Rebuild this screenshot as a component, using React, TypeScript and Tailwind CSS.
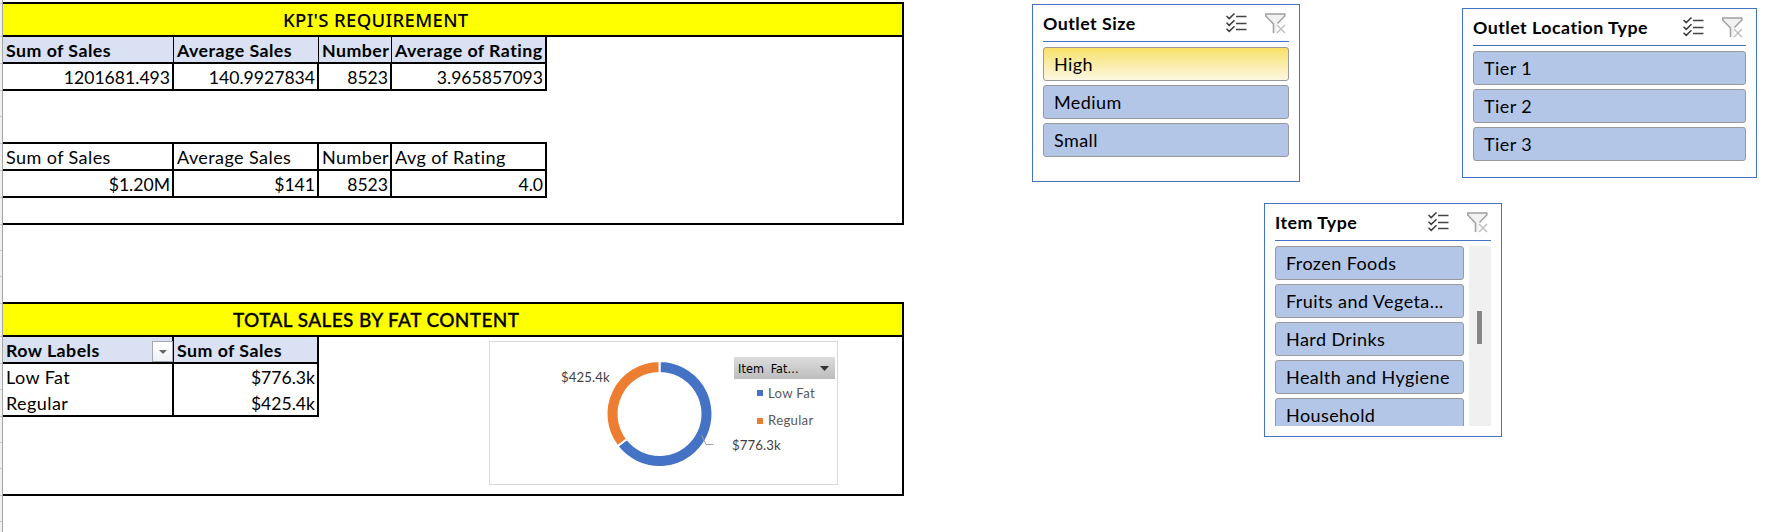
import React from "react";

const TICKS = [3, 36, 63, 90, 116, 143, 170, 197, 224, 250, 276, 303, 336, 363, 389, 416, 442, 468, 495, 521];

type CellProps = { children?: React.ReactNode; className?: string };

function Cell({ children, className = "" }: CellProps) {
  return (
    <div className={`flex h-[25px] items-center overflow-hidden pt-[2px] whitespace-pre ${className}`}>
      <span>{children}</span>
    </div>
  );
}

const BOLD = "font-bold text-[17.8px] tracking-[0.45px]";
const REG = "text-[18px] tracking-[0.42px]";
const NUM = "text-[17.6px]";

function KpiTable() {
  return (
    <div className="w-[544px]">
      <div className={`flex border-b-2 border-black bg-[#d9e1f2] ${BOLD}`}>
        <Cell className="w-[171px] border-r border-black pl-[3px]">Sum of Sales</Cell>
        <Cell className="w-[145px] border-r border-black pl-[3px]">Average Sales</Cell>
        <Cell className="w-[73px] border-r border-black pl-[3px]">Number</Cell>
        <Cell className="w-[155px] border-r-2 border-black pl-[3px]">Average of Rating</Cell>
      </div>
      <div className={`flex border-b-2 border-black ${NUM}`}>
        <Cell className="w-[171px] justify-end border-r-2 border-black pt-[3px] pr-[2px]">1201681.493</Cell>
        <Cell className="w-[145px] justify-end border-r-2 border-black pt-[3px] pr-[2px]">140.9927834</Cell>
        <Cell className="w-[73px] justify-end border-r-2 border-black pt-[3px] pr-[2px]">8523</Cell>
        <Cell className="w-[155px] justify-end border-r-2 border-black pt-[3px] pr-[2px]">3.965857093</Cell>
      </div>
      <div className="h-[51px]" />
      <div className={`flex border-y-2 border-black ${REG}`}>
        <Cell className="w-[171px] border-r-2 border-black pl-[3px]">Sum of Sales</Cell>
        <Cell className="w-[145px] border-r-2 border-black pl-[3px]">Average Sales</Cell>
        <Cell className="w-[73px] border-r-2 border-black pl-[3px]">Number</Cell>
        <Cell className="w-[155px] border-r-2 border-black pl-[3px]">Avg of Rating</Cell>
      </div>
      <div className={`flex border-b-2 border-black ${NUM}`}>
        <Cell className="w-[171px] justify-end border-r-2 border-black pt-[3px] pr-[2px]">$1.20M</Cell>
        <Cell className="w-[145px] justify-end border-r-2 border-black pt-[3px] pr-[2px]">$141</Cell>
        <Cell className="w-[73px] justify-end border-r-2 border-black pt-[3px] pr-[2px]">8523</Cell>
        <Cell className="w-[155px] justify-end border-r-2 border-black pt-[3px] pr-[2px]">4.0</Cell>
      </div>
    </div>
  );
}

function FatTable() {
  return (
    <div className="h-fit w-[316px] shrink-0 border-b-2 border-black">
      <div className={`flex border-b-2 border-black bg-[#d9e1f2] ${BOLD}`}>
        <div className="relative">
          <Cell className="w-[171px] border-r-2 border-black pl-[3px]">Row Labels</Cell>
          <div className="absolute top-[4px] right-px flex h-[21px] w-[21px] items-center justify-center border border-[#a6a6b0] bg-linear-to-b from-white to-[#eef1f6]">
            <svg width="8" height="4" viewBox="0 0 8 4">
              <path d="M0 0h8L4 4z" fill="#666" />
            </svg>
          </div>
        </div>
        <Cell className="w-[145px] border-r-2 border-black pl-[3px]">Sum of Sales</Cell>
      </div>
      <div className="flex">
        <Cell className={`h-[26px] w-[171px] border-r-2 border-black pt-px pl-[3px] ${REG}`}>Low Fat</Cell>
        <Cell className={`h-[26px] w-[145px] justify-end border-r-2 border-black pr-[2px] ${NUM}`}>$776.3k</Cell>
      </div>
      <div className="flex">
        <Cell className={`w-[171px] border-r-2 border-black pl-[3px] ${REG}`}>Regular</Cell>
        <Cell className={`w-[145px] justify-end border-r-2 border-black pt-[3px] pr-[2px] ${NUM}`}>$425.4k</Cell>
      </div>
    </div>
  );
}

function arc(a0: number, a1: number, r0: number, r1: number) {
  const p = (a: number, r: number) => {
    const t = ((a - 90) * Math.PI) / 180;
    return `${(r * Math.cos(t)).toFixed(2)} ${(r * Math.sin(t)).toFixed(2)}`;
  };
  const big = a1 - a0 > 180 ? 1 : 0;
  return `M${p(a0, r1)}A${r1} ${r1} 0 ${big} 1 ${p(a1, r1)}L${p(a1, r0)}A${r0} ${r0} 0 ${big} 0 ${p(a0, r0)}Z`;
}

function DonutChart() {
  const split = (776.3 / (776.3 + 425.4)) * 360;
  return (
    <div className="relative mt-[4px] ml-[170px] h-[144px] w-[349px] border border-[#d9d9d9] bg-white text-[13.2px] tracking-[0.1px] text-[#404040]">
      <svg className="block" width="347" height="142" viewBox="0 0 347 142">
        <g transform="translate(169.5 72)" stroke="#fff" strokeWidth="2">
          <path d={arc(0, split, 41, 53)} fill="#4472c4" />
          <path d={arc(split, 360, 41, 53)} fill="#ed7d31" />
        </g>
        <path d="M211.5 93L216 102.5H223.5" fill="none" stroke="#a6a6a6" strokeWidth="1" />
      </svg>
      <span className="absolute top-[26px] left-[71px]">$425.4k</span>
      <span className="absolute top-[94px] left-[242px]">$776.3k</span>
      <div className="absolute top-[15px] left-[244px] flex h-[22px] w-[101px] items-center justify-between bg-linear-to-b from-[#dcdcdc] to-[#bdbdbd] pr-[6px] pl-[4px] font-['DejaVu_Sans_Condensed','DejaVu_Sans',sans-serif] text-[12.5px] tracking-[0.1px] [word-spacing:3px] text-black">
        <span className="pt-[2px] whitespace-pre">Item Fat...</span>
        <svg width="9" height="5" viewBox="0 0 9 5">
          <path d="M0 0h9L4.5 5z" fill="#333" />
        </svg>
      </div>
      <div className="absolute top-[42px] left-[267px] flex flex-col gap-[7px] text-[#595959]">
        <div className="flex h-[20px] items-center gap-[5px]">
          <i className="mb-[2px] size-[6px] bg-[#4472c4]" />
          <span className="tracking-[0.3px]">Low Fat</span>
        </div>
        <div className="flex h-[20px] items-center gap-[5px]">
          <i className="size-[6px] bg-[#ed7d31]" />
          <span className="tracking-[0.3px]">Regular</span>
        </div>
      </div>
    </div>
  );
}

function MultiSelectIcon() {
  return (
    <svg width="21" height="20" viewBox="0 0 21 20" fill="none">
      <path d="M0.5 3L3.2 5.6L8.5 0.5M0.5 9.8L3.2 12.4L8.5 7.3M0.5 15.8L3.2 18.4L8.5 13.3" stroke="#3c3c3c" strokeWidth="1.5" />
      <path d="M10 3.5H20.5M10 10.5H20.5M10 16.5H20.5" stroke="#444" strokeWidth="1.3" />
    </svg>
  );
}

function ClearFilterIcon() {
  return (
    <svg width="21" height="21" viewBox="0 0 21 21" fill="none">
      <path d="M0.7 1H19.8V3L12 11V19.5H8.5V11L0.7 3Z" fill="#f2f2f2" />
      <path d="M8.5 20V11L0.7 3V1H19.8V3L12.5 10.5" stroke="#a0a0a0" strokeWidth="1.5" />
      <path d="M12 12L20 20M20 12L12 20" stroke="#bdbdbd" strokeWidth="1.4" />
    </svg>
  );
}

type SlicerProps = {
  title: string;
  items: string[];
  selected?: string;
  scroll?: boolean;
  className: string;
};

function Slicer({ title, items, selected, scroll, className }: SlicerProps) {
  return (
    <div className={`border border-[#4472c4] bg-white px-[10px] ${className}`}>
      <div className="flex h-[37px] items-center border-b border-[#4472c4] pr-[3px]">
        <span className="flex-1 text-[17.8px] font-bold tracking-[0.48px] whitespace-nowrap">{title}</span>
        <div className="flex gap-[18px]">
          <MultiSelectIcon />
          <ClearFilterIcon />
        </div>
      </div>
      <div className={`mt-[5px] flex gap-[5px] ${scroll ? "h-[180px] overflow-hidden" : ""}`}>
        <div className="flex flex-1 flex-col gap-[4px]">
          {items.map((item) => (
            <div
              key={item}
              className={`flex h-[34px] shrink-0 items-center rounded-[3px] border border-[#999] pl-[10px] text-[18px] tracking-[0.42px] whitespace-nowrap ${
                item === selected ? "bg-linear-to-b from-[#f8e162] to-[#fcf7e0]" : "bg-[#b4c6e7]"
              }`}
            >
              {item}
            </div>
          ))}
        </div>
        {scroll && (
          <div className="w-[22px] bg-[#f0f0f0] pt-[65px] pl-[8px]">
            <div className="h-[33px] w-[5px] bg-[#868686]" />
          </div>
        )}
      </div>
    </div>
  );
}

export default function App() {
  return (
    <div className="flex h-[532px] w-[1782px] overflow-hidden bg-white font-[Lato,sans-serif] text-black">
      <div className="relative w-[3px] shrink-0 border-r border-[#a6a6a6] bg-[#f0f0f0]">
        {TICKS.map((y) => (
          <i key={y} className="absolute left-0 h-px w-[2px] bg-[#c8c8c8]" style={{ top: y }} />
        ))}
      </div>
      <div className="w-[901px] shrink-0 pt-[2px]">
        <section className="h-[223px] border-y-2 border-r-2 border-black">
          <h2 className="flex h-[33px] items-center border-b-2 border-black bg-[#ffff00] pl-[280px] font-['Noto_Sans',sans-serif] text-[18.5px] font-medium tracking-[0.35px] whitespace-nowrap">
            <span>KPI'S REQUIREMENT</span>
          </h2>
          <KpiTable />
        </section>
        <section className="mt-[77px] h-[194px] border-y-2 border-r-2 border-black">
          <h2 className="flex h-[33px] items-center border-b-2 border-black bg-[#ffff00] pt-[2px] pl-[230px] text-[19px] font-medium tracking-[0.4px] whitespace-nowrap [-webkit-text-stroke:0.3px_black]">
            <span>TOTAL SALES BY FAT CONTENT</span>
          </h2>
          <div className="flex">
            <FatTable />
            <DonutChart />
          </div>
        </section>
      </div>
      <div className="flex-1 pt-[4px] pl-[128px]">
        <div className="flex h-[199px] items-start gap-[162px]">
          <Slicer className="h-[178px] w-[268px]" title="Outlet Size" items={["High", "Medium", "Small"]} selected="High" />
          <Slicer className="mt-[4px] h-[170px] w-[295px]" title="Outlet Location Type" items={["Tier 1", "Tier 2", "Tier 3"]} />
        </div>
        <Slicer
          className="ml-[232px] h-[234px] w-[238px]"
          title="Item Type"
          items={["Frozen Foods", "Fruits and Vegeta...", "Hard Drinks", "Health and Hygiene", "Household"]}
          scroll
        />
      </div>
    </div>
  );
}
